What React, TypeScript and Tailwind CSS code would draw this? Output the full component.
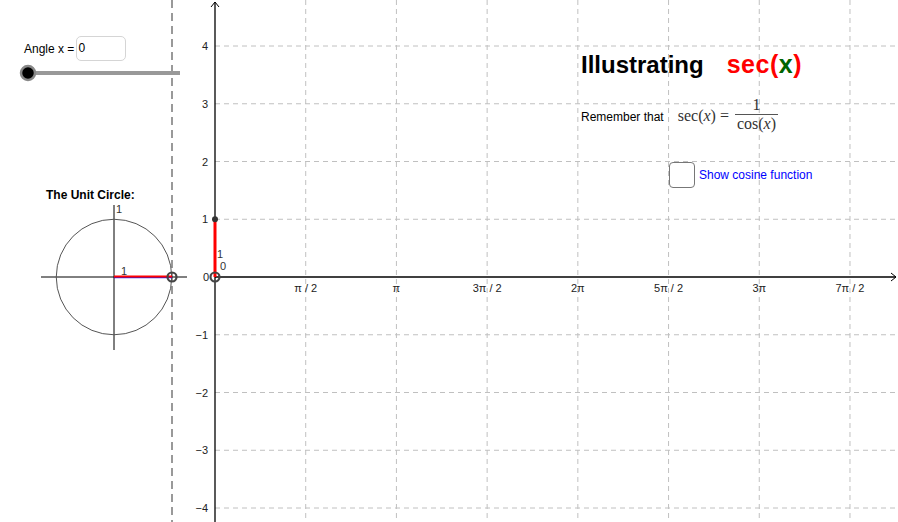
import React from "react";

const U = 57.75;
const OX = 215;
const OY = 277;
const XU = 90.71;

const xLabels = ["π / 2", "π", "3π / 2", "2π", "5π / 2", "3π", "7π / 2"];
const yVals = [4, 3, 2, 1, -1, -2, -3, -4];

function Graph() {
  return (
    <svg className="absolute inset-0" width={898} height={522} viewBox="0 0 898 522">
      {/* grid */}
      {yVals.map((v) => (
        <line key={"h" + v} x1={OX} x2={898} y1={OY - v * U} y2={OY - v * U} stroke="#c0c0c0" strokeWidth={1} strokeDasharray="5 4" />
      ))}
      {xLabels.map((_, i) => (
        <line key={"v" + i} x1={OX + (i + 1) * XU} x2={OX + (i + 1) * XU} y1={0} y2={522} stroke="#c0c0c0" strokeWidth={1} strokeDasharray="5 4" />
      ))}
      {/* axes */}
      <line x1={OX} x2={OX} y1={2} y2={522} stroke="#000" strokeWidth={1.3} />
      <polyline points={`${OX - 4},7 ${OX},2 ${OX + 4},7`} fill="none" stroke="#000" strokeWidth={1} />
      <line x1={OX} x2={896} y1={OY} y2={OY} stroke="#000" strokeWidth={1.3} />
      <polyline points={`891,273 896,277 891,281`} fill="none" stroke="#000" strokeWidth={1} />
      {/* tick labels */}
      <g fontFamily="'Liberation Sans', Arial, sans-serif" fontSize={11} fill="#222">
        {xLabels.map((t, i) => (
          <text key={t} x={OX + (i + 1) * XU} y={292} textAnchor="middle">{t}</text>
        ))}
        {yVals.map((v) => (
          <text key={"t" + v} x={208} y={OY - v * U + 4} textAnchor="end">{v < 0 ? "\u2212" + -v : String(v)}</text>
        ))}
        <text x={209} y={281} textAnchor="end">0</text>
        <text x={217} y={258} fontSize={11} fill="#333">1</text>
        <text x={220} y={270} fontSize={11} fill="#333">0</text>
      </g>
      {/* red segment */}
      <line x1={OX} x2={OX} y1={OY} y2={OY - U} stroke="#ff0000" strokeWidth={3} />
      <circle cx={OX} cy={OY - U} r={3} fill="#333" />
      <circle cx={OX} cy={OY} r={4.5} fill="none" stroke="#444" strokeWidth={2.2} />

      {/* left dashed divider */}
      <line x1={172} x2={172} y1={0} y2={522} stroke="#999" strokeWidth={2} strokeDasharray="8 5" />

      {/* unit circle */}
      <line x1={41} x2={187} y1={OY} y2={OY} stroke="#000" strokeWidth={1} />
      <line x1={114} x2={114} y1={205} y2={350} stroke="#000" strokeWidth={1} />
      <circle cx={114} cy={OY} r={U} fill="none" stroke="#555" strokeWidth={1} />
      <line x1={114} x2={172} y1={OY + 0.7} y2={OY + 0.7} stroke="#0000ff" strokeWidth={1} />
      <line x1={114} x2={172} y1={OY - 0.5} y2={OY - 0.5} stroke="#ff0000" strokeWidth={2} />
      <circle cx={172} cy={OY} r={4.5} fill="none" stroke="#444" strokeWidth={2.2} />
      <g fontFamily="'Liberation Sans', Arial, sans-serif" fontSize={11} fill="#333">
        <text x={116} y={213}>1</text>
        <text x={121} y={275}>1</text>
      </g>

      {/* slider */}
      <line x1={28} x2={180} y1={73} y2={73} stroke="#999" strokeWidth={4} />
      <circle cx={28} cy={73} r={7} fill="#000" stroke="#888" strokeWidth={2.5} />
    </svg>
  );
}

export default function App() {
  return (
    <div className="relative w-[898px] h-[522px] overflow-hidden bg-white font-['Liberation_Sans',Arial,sans-serif] text-black">
      <Graph />
      {/* slider label */}
      <div className="absolute left-[24px] top-[36px] flex items-center gap-[2px] text-[12px]">
        <span>Angle x =</span>
        <div className="h-[25px] w-[50px] rounded-[5px] border border-[#d5d5d5] bg-white pl-[1px] leading-[23px]">0</div>
      </div>
      {/* unit circle title */}
      <div className="absolute left-[46px] top-[189px] text-[12px] font-bold leading-[13px]">The Unit Circle:</div>

      {/* title */}
      <div className="absolute left-[581px] top-[48px] flex items-baseline text-[24px] font-bold leading-[32px]">
        <span>Illustrating</span>
        <span className="ml-[23px] text-[25px] tracking-[0.5px] text-[#ff0000]">sec(<span className="text-[#006400]">x</span>)</span>
      </div>

      {/* remember formula */}
      <div className="absolute left-[581px] top-[96px] flex items-center text-[12px]">
        <span className="mt-[4px]">Remember that</span>
        <span className="ml-[14px] flex items-center font-['Liberation_Serif',serif] text-[16px] text-[#333]">
          <span className="mt-[3px]">sec(<i>x</i>) =</span>
          <span className="ml-[6px] flex flex-col items-center leading-[18px]">
            <span className="px-[1px]">1</span>
            <span className="border-t border-[#555] px-[2px]">cos(<i>x</i>)</span>
          </span>
        </span>
      </div>

      {/* checkbox */}
      <div className="absolute left-[669px] top-[162px] flex items-center gap-[4px]">
        <div className="h-[26px] w-[26px] rounded-[4px] border border-[#777] bg-white" />
        <span className="text-[12px] text-[#0000ff]">Show cosine function</span>
      </div>
    </div>
  );
}
